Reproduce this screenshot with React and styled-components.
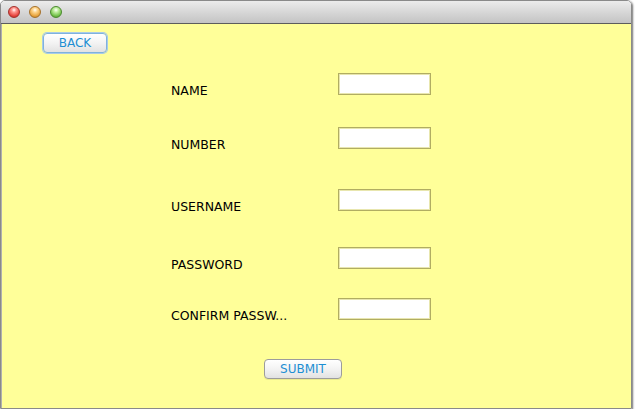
import React from "react";
import styled, { createGlobalStyle } from "styled-components";

const Global = createGlobalStyle`
  html, body {
    margin: 0;
    padding: 0;
    background: #ffffff;
  }
  body {
    font-family: "DejaVu Sans", "Liberation Sans", sans-serif;
  }
`;

const Window = styled.div`
  width: 630px;
  height: 407px;
  border: 1px solid #8a8a8a;
  border-radius: 5px 5px 0 0;
  box-shadow: 1px 1px 2px rgba(0, 0, 0, 0.55);
  display: flex;
  flex-direction: column;
  overflow: hidden;
`;

const TitleBar = styled.div`
  height: 22px;
  flex: none;
  display: flex;
  align-items: center;
  gap: 9px;
  padding-left: 7px;
  background: linear-gradient(#ececec, #d3d3d3 60%, #c4c4c4);
  border-bottom: 1px solid #5c5c5c;
`;

const Light = styled.span`
  width: 12px;
  height: 12px;
  border-radius: 50%;
  box-sizing: border-box;
  border: 1px solid ${(p) => p.$edge};
  background: radial-gradient(circle at 50% 30%, #ffffff 0, ${(p) => p.$light} 25%, ${(p) => p.$color} 70%, ${(p) => p.$edge} 100%);
`;

const Content = styled.div`
  flex: 1;
  background: #ffff99;
  border-left: 1px solid #b0b0b0;
  padding: 9px 0 0 40px;
  display: flex;
  flex-direction: column;
`;

const Button = styled.button`
  box-sizing: border-box;
  height: 20px;
  width: ${(p) => p.$w}px;
  margin-left: ${(p) => p.$left || 0}px;
  margin-top: ${(p) => p.$top || 0}px;
  padding: 0;
  font-family: "DejaVu Sans", "Liberation Sans", sans-serif;
  font-size: 12px;
  color: #1d8fd3;
  border-radius: 4px;
  border: 1px solid ${(p) => (p.$focus ? "#7fb2dd" : "#9c9c9c")};
  box-shadow: ${(p) => (p.$focus ? "0 0 0 1px #a9cbe8" : "0 1px 0 rgba(0,0,0,0.08)")};
  background: linear-gradient(#ffffff, #f3f3f3 50%, #e2e2e2);
`;

const Form = styled.div`
  display: flex;
  flex-direction: column;
  margin-left: 129px;
  margin-top: 20px;
`;

const Row = styled.div`
  display: flex;
  align-items: flex-start;
  height: 24px;
  margin-top: ${(p) => p.$top}px;
`;

const Label = styled.div`
  width: 167px;
  padding-top: 11px;
  font-size: 12.5px;
  color: #000000;
  line-height: 14px;
`;

const Field = styled.input`
  box-sizing: border-box;
  width: 93px;
  height: 22px;
  margin: 0;
  border: 1px solid #b1ad62;
  box-shadow: inset 0 0 0 1px #e8e6ae;
  background: #ffffff;
`;

const rows = [
  { label: "NAME", top: 0 },
  { label: "NUMBER", top: 30 },
  { label: "USERNAME", top: 38 },
  { label: "PASSWORD", top: 34 },
  { label: "CONFIRM PASSW...", top: 27 },
];

export default function App() {
  return (
    <>
      <Global />
      <Window>
        <TitleBar>
          <Light $color="#e5413a" $light="#ff9a93" $edge="#a3302b" />
          <Light $color="#e7a23a" $light="#ffd892" $edge="#a6712a" />
          <Light $color="#6fbf45" $light="#c3f0a3" $edge="#4a8a2e" />
        </TitleBar>
        <Content>
          <Button $w={64} $left={1} $focus>BACK</Button>
          <Form>
            {rows.map((r) => (
              <Row key={r.label} $top={r.top}>
                <Label>{r.label}</Label>
                <Field />
              </Row>
            ))}
          </Form>
          <Button $w={78} $left={222} $top={37}>SUBMIT</Button>
        </Content>
      </Window>
    </>
  );
}
